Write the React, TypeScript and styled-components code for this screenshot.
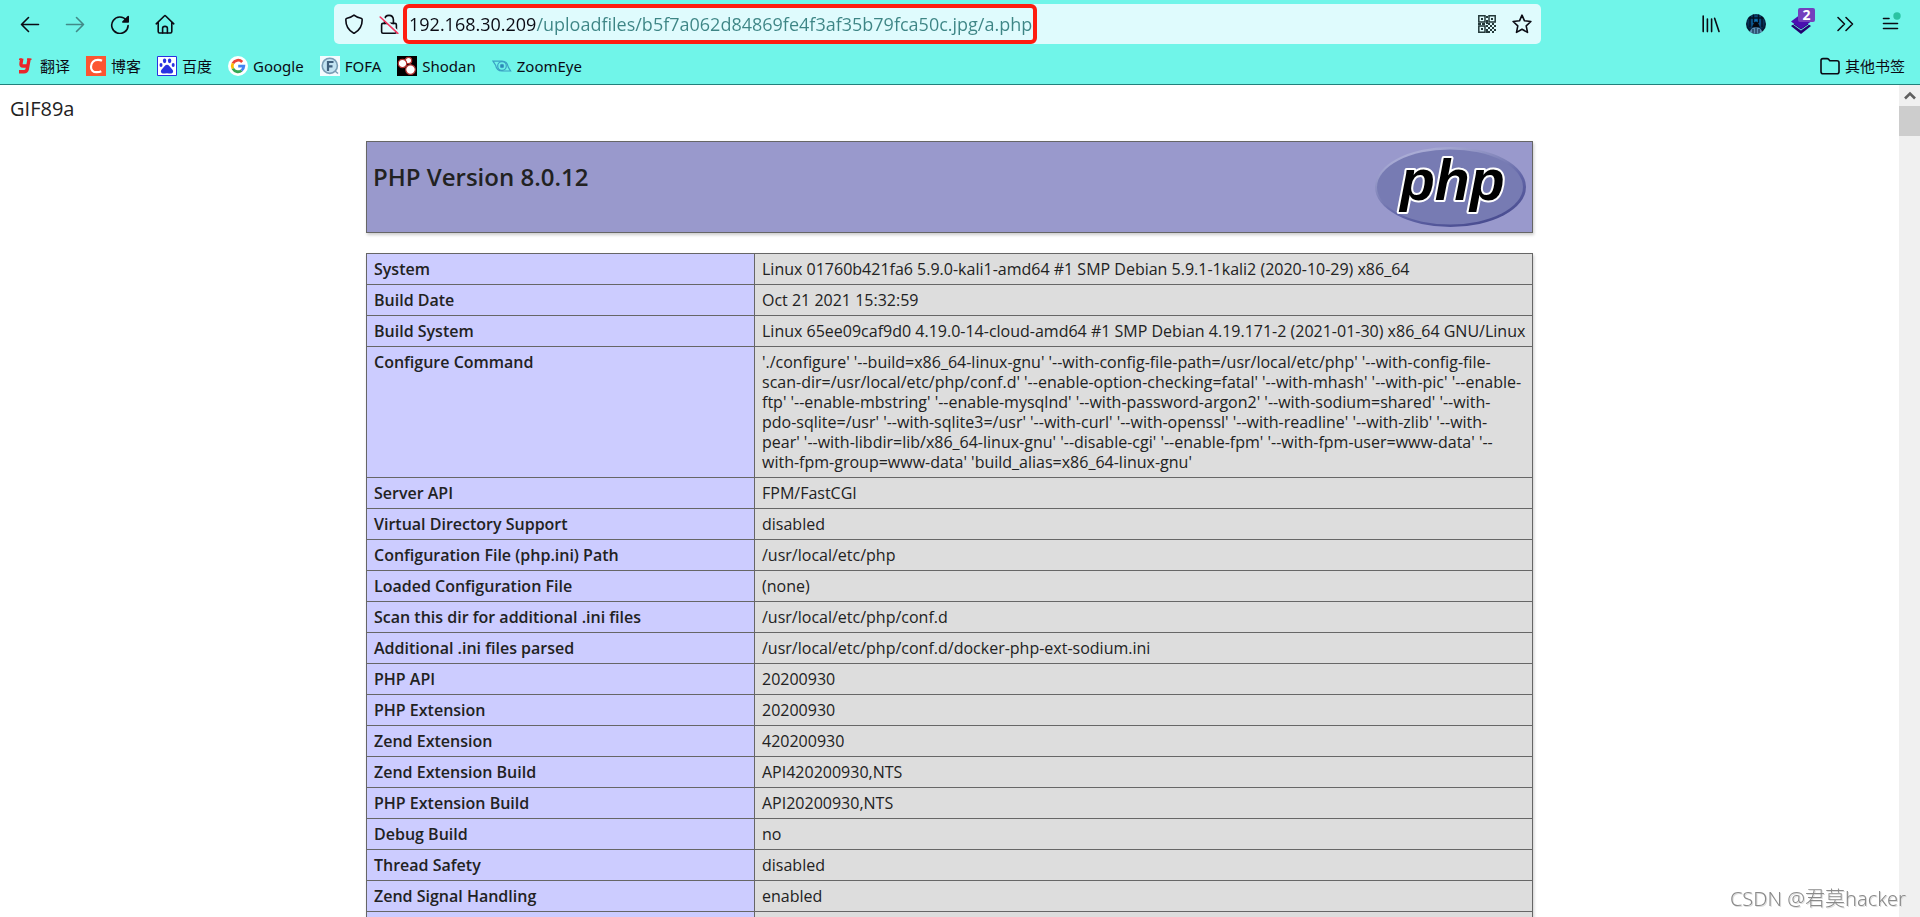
import React from 'react';
import styled, { createGlobalStyle } from 'styled-components';

const GlobalStyle = createGlobalStyle`
  *, *::before, *::after { box-sizing: border-box; }
  body {
    margin: 0;
    font-family: "Noto Sans", "Noto Sans CJK SC", sans-serif;
    color: #222;
    background: #fff;
  }
`;

/* ---------- browser chrome ---------- */

const Browser = styled.div`
  display: flex;
  flex-direction: column;
  height: 100vh;
  overflow: hidden;
`;

const Chrome = styled.header`
  flex: none;
  background: #70f5e9;
  border-bottom: 1px solid #22817c;
  color: #0b0b14;
`;

const Toolbar = styled.div`
  display: flex;
  align-items: center;
  height: 48px;
  padding: 0 7px;
`;

const Spring = styled.div`
  flex: 0 1 147px;
`;

const ToolButton = styled.button<{ $faded?: boolean }>`
  position: relative;
  display: flex;
  align-items: center;
  justify-content: center;
  flex: none;
  width: 45px;
  height: 40px;
  padding: 0;
  border: 0;
  background: none;
  color: inherit;
  opacity: ${p => (p.$faded ? 0.45 : 1)};
`;

const Badge = styled.span`
  position: absolute;
  top: 4px;
  right: 8px;
  width: 17px;
  height: 14px;
  border-radius: 2px;
  background: #7340bd;
  color: #fff;
  font: 700 14px/14px "Noto Sans", sans-serif;
  text-align: center;
`;

const AddressBar = styled.form`
  display: flex;
  align-items: center;
  flex: 1 1 0;
  min-width: 0;
  height: 40px;
  border-radius: 5px;
  background: #dffbfd;
`;

const BarGroup = styled.div`
  display: flex;
  gap: 15px;
  flex: none;
  padding: 0 9px 0 10px;

  &:first-child { padding-right: 4px; }
`;

const BarButton = styled.button`
  display: flex;
  align-items: center;
  justify-content: center;
  width: 20px;
  height: 40px;
  padding: 0;
  border: 0;
  background: none;
  color: inherit;
`;

const Marked = styled.label`
  display: flex;
  flex: 0 1 634px;
  min-width: 0;
  height: 40px;
  border: 4px solid #fe1d10;
  border-radius: 6px;
`;

const UrlInput = styled.input`
  flex: 1;
  min-width: 0;
  padding: 0 0 0 2px;
  border: 0;
  outline: 0;
  font: 18px/32px "Open Sans", sans-serif;
  color: transparent;
  background: linear-gradient(90deg, #0b0b14 129px, #3d8585 129px);
  background-clip: text;
  -webkit-background-clip: text;
`;

const BarFill = styled.div`
  flex: 1;
`;

const Bookmarks = styled.nav`
  display: flex;
  align-items: center;
  gap: 16px;
  height: 36px;
  padding: 0 15px;
`;

const Bookmark = styled.a<{ $end?: boolean }>`
  display: flex;
  align-items: center;
  gap: 5px;
  margin-left: ${p => (p.$end ? 'auto' : '0')};
  color: #0b0b14;
  font-size: 15px;
  line-height: 20px;
  text-decoration: none;
  white-space: nowrap;
`;

/* ---------- page ---------- */

const Viewport = styled.div`
  display: flex;
  flex: 1;
  min-height: 0;
`;

const Page = styled.main`
  flex: 1;
  min-width: 0;
  padding: 10px;
  overflow: hidden;
  font-family: "Open Sans", "Noto Sans CJK SC", sans-serif;
`;

const Prefix = styled.p`
  margin: 0 0 19px;
  font-size: 20px;
  line-height: 27px;
`;

const Banner = styled.section`
  display: flex;
  justify-content: space-between;
  max-width: 1167px;
  margin: 0 auto 20px;
  padding: 5px 6px;
  border: 1px solid #666;
  background: #9999cc;
  box-shadow: 1px 2px 3px #ccc;
`;

const Version = styled.h1`
  margin: 14px 0;
  font-size: 24px;
  font-weight: 600;
  line-height: 32px;
`;

const InfoTable = styled.table`
  width: 100%;
  max-width: 1167px;
  margin: 0 auto;
  border-collapse: collapse;
  box-shadow: 1px 2px 3px #ccc;
  font-size: 16px;
  line-height: 20px;
`;

const Label = styled.th`
  width: 388px;
  padding: 5px 5px 5px 7px;
  border: 1px solid #666;
  background: #ccccff;
  font-weight: 600;
  text-align: left;
  vertical-align: baseline;
`;

const Value = styled.td`
  padding: 5px 5px 5px 7px;
  border: 1px solid #666;
  background: #ddd;
  vertical-align: baseline;
`;

const Scrollbar = styled.div`
  flex: none;
  width: 21px;
  background: #f0f0f0;
`;

const ScrollArrow = styled.button`
  display: flex;
  align-items: center;
  justify-content: center;
  width: 21px;
  height: 21px;
  padding: 0;
  border: 0;
  background: none;
`;

const Thumb = styled.div`
  height: 30px;
  background: #cdcdcd;
`;

const Watermark = styled.div`
  position: fixed;
  right: 14px;
  bottom: 4px;
  color: #8a8a8a;
  font-size: 20px;
  font-weight: 300;
  line-height: 28px;
  text-shadow: 1px 1px 0 #ddd;
`;

/* ---------- icons ---------- */

const Line = ({ children, w = 20, h = 20, sw = 1.6 }: { children: React.ReactNode; w?: number; h?: number; sw?: number }) => (
  <svg width={w} height={h} viewBox={`0 0 ${w} ${h}`} fill="none" stroke="currentColor" strokeWidth={sw} strokeLinecap="round" strokeLinejoin="round" aria-hidden="true">
    {children}
  </svg>
);

const BackIcon = () => <Line><path d="M1.5 10.5H18.5M8.5 3.5L1.5 10.5L8.5 17.5" /></Line>;
const ForwardIcon = () => <Line><path d="M1.5 10.5H18.5M11.5 3.5L18.5 10.5L11.5 17.5" /></Line>;
const ReloadIcon = () => (
  <Line>
    <path d="M16.4 6.2A8.2 8.2 0 1 0 18.1 11.6" />
    <path d="M18.2 2.6V8H12.8Z" fill="currentColor" />
  </Line>
);
const HomeIcon = () => (
  <Line>
    <path d="M1.2 9.8L9.3 2Q10 1.4 10.7 2L18.8 9.8M3.2 8.6V17.6Q3.2 19 4.6 19H15.4Q16.8 19 16.8 17.6V8.6" />
    <path d="M7.6 19V14.2Q7.6 12.4 10 12.4Q12.4 12.4 12.4 14.2V19" />
  </Line>
);
const ShieldIcon = () => (
  <Line><path d="M10 1.2C12 2.9 14.4 3.8 17 4.2Q18.2 4.5 18.2 5.8C18.2 12 15.6 16.6 10 19.4C4.4 16.6 1.8 12 1.8 5.8Q1.8 4.5 3 4.2C5.6 3.8 8 2.9 10 1.2Z" /></Line>
);
const InsecureIcon = () => (
  <Line>
    <path d="M5.6 9.4V5.8Q5.8 1.4 10 1.4Q14.2 1.4 14.4 5.8V9.4" />
    <path d="M4 9.4H16Q17.4 9.4 17.4 10.8V17.8Q17.4 19.2 16 19.2H4Q2.6 19.2 2.6 17.8V10.8Q2.6 9.4 4 9.4Z" />
    <path d="M2 2L19.6 18.4" stroke="#dffbfd" strokeWidth="2.4" />
    <path d="M1.2 3L18.8 19.4" stroke="#f5335f" strokeWidth="1.6" />
  </Line>
);
const QrIcon = () => (
  <svg width="20" height="20" viewBox="0 0 20 20" fill="none" stroke="#24393a" strokeWidth="1.5" aria-hidden="true">
    <path d="M1.8 1.8H8V8H1.8ZM12 1.8H18.2V8H12ZM1.8 12H8V18.2H1.8Z" />
    <path fill="#24393a" stroke="none" d="M4 4h2v2H4zM14 4h2v2h-2zM4 14h2v2H4zM9 2h2v2H9zM9 6h2v4H9zM1 9h3v2H1zM5 9h3v2H5zM11 9h2v2h-2zM15 9h2v2h-2zM17 11h2v2h-2zM13 11h2v2h-2zM9 11h2v2H9zM11 13h2v2h-2zM15 13h2v2h-2zM9 15h2v4H9zM13 15h2v2h-2zM17 15h2v2h-2zM11 17h2v2h-2zM15 17h2v2h-2z" />
  </svg>
);
const StarIcon = () => (
  <Line><path d="M10 1.2L12.5 6.8L18.9 7.5L14.2 11.8L15.5 18.4L10 15.2L4.5 18.4L5.8 11.8L1.1 7.5L7.5 6.8Z" /></Line>
);
const LibraryIcon = () => <Line><path d="M2.2 2V17.6M6.4 5V17.6M10.6 5V17.6M13.6 4.2L18 17.4" /></Line>;
const AvatarIcon = () => (
  <svg width="20" height="20" viewBox="0 0 20 20" aria-hidden="true">
    <defs>
      <clipPath id="disc"><circle cx="10" cy="10" r="10" /></clipPath>
      <radialGradient id="glow" cx="0.5" cy="0.4" r="0.5">
        <stop offset="0" stopColor="#1183d0" />
        <stop offset="1" stopColor="#041830" />
      </radialGradient>
    </defs>
    <g clipPath="url(#disc)">
      <path fill="url(#glow)" d="M0 0H20V20H0Z" />
      <path stroke="#041022" strokeWidth="1.4" d="M4 0V13M7.500 0V9M12.500 0V9M16 0V13M0 4H20" />
      <path fill="#05070d" d="M6 13.500L8 8.500Q10 6.500 12 8.500L14 13.500Z" />
      <path fill="#5d8fb4" d="M3 20Q4 14.500 8 13.500H12Q16 14.500 17 20Z" />
      <path stroke="#16324c" strokeWidth="1.200" d="M7 20V15M10 20V14M13 20V15" />
    </g>
  </svg>
);
const LayersIcon = () => (
  <svg width="20" height="20" viewBox="0 0 20 20" aria-hidden="true">
    <path fill="#23006f" d="M0 12L10 5L20 12L10 20Z" />
    <path fill="#70f5e9" d="M0 8.500L10 15.600L20 8.500V9.300L10 16.400L0 9.300Z" />
    <path fill="#4a0fb0" d="M0 7.500L10 0L20 7.500L10 15Z" />
  </svg>
);
const MoreIcon = () => <Line><path d="M2 3.500L8.500 10L2 16.500M10 3.500L16.500 10L10 16.500" /></Line>;
const MenuIcon = () => (
  <Line w={22} h={24}>
    <path d="M3.500 6.500H9M3.500 11.500H17.500M3.500 16.500H17.500" />
    <circle cx="17" cy="4" r="3.700" fill="#2ac3a2" stroke="none" />
  </Line>
);
const FolderIcon = () => (
  <Line><path d="M3 2.600H7Q8 2.600 8.600 3.300L9.800 4.700H17Q19 4.700 19 6.700V15.800Q19 17.800 17 17.800H3Q1 17.800 1 15.800V4.600Q1 2.600 3 2.600Z" /></Line>
);

const YoudaoIcon = () => (
  <svg width="20" height="20" viewBox="0 0 20 20" fill="none" stroke="#e9252b" aria-hidden="true">
    <path strokeWidth="3.400" d="M6.800 2.500L6 7.500Q5.600 10 8 10H12" />
    <path strokeWidth="3.400" d="M14.200 2.500L12.300 13Q11.600 15.800 9 15.800H4" />
    <path strokeWidth="1.600" d="M4 3.200H7M12 3.200H16.500" />
  </svg>
);
const BlogIcon = () => (
  <svg width="20" height="20" viewBox="0 0 20 20" aria-hidden="true">
    <path fill="#fc5531" d="M0 0H20V20H0Z" />
    <path fill="none" stroke="#fff" strokeWidth="2.200" d="M16 4.800Q14.500 3.900 12 3.900C7.800 3.900 5.200 6.800 5 10.600C4.800 14 7 16.200 10.500 16.200Q13.500 16.200 15.300 15.200" />
  </svg>
);
const BaiduIcon = () => (
  <svg width="20" height="20" viewBox="0 0 20 20" fill="#2932e1" aria-hidden="true">
    <path fill="#fff" stroke="#2932e1" d="M.5 .5H19.500V19.500H.5Z" />
    <ellipse cx="7.600" cy="4.800" rx="1.700" ry="2.400" />
    <ellipse cx="12.600" cy="4.800" rx="1.700" ry="2.400" />
    <ellipse cx="4" cy="9" rx="1.500" ry="2.100" />
    <ellipse cx="16.200" cy="9" rx="1.500" ry="2.100" />
    <path d="M10 8.800C12 8.800 12.600 10.800 14.200 12.200C16 13.800 16.600 15 15.800 16.600C14.800 18.200 12.600 17.300 10 17.300C7.400 17.300 5.200 18.200 4.200 16.600C3.400 15 4 13.800 5.800 12.200C7.400 10.800 8 8.800 10 8.800Z" />
  </svg>
);
const GoogleIcon = () => (
  <svg width="20" height="20" viewBox="0 0 20 20" fill="none" strokeWidth="2.800" aria-hidden="true">
    <circle cx="10" cy="10" r="10" fill="#fff" />
    <path stroke="#ea4335" d="M14.200 6A5.800 5.800 0 0 0 4.900 7.300" />
    <path stroke="#fbbc05" d="M4.900 7.300A5.800 5.800 0 0 0 4.900 12.700" />
    <path stroke="#34a853" d="M4.900 12.700A5.800 5.800 0 0 0 13.600 14.500" />
    <path stroke="#4285f4" d="M13.600 14.500Q15.600 13 15.800 10.200H10.200" />
  </svg>
);
const FofaIcon = () => (
  <svg width="20" height="20" viewBox="0 0 20 20" fill="none" aria-hidden="true">
    <path fill="#f3fbff" d="M0 0H20V20H0Z" />
    <circle cx="9.800" cy="9.800" r="7.600" fill="#c3e3f2" stroke="#7a9db5" strokeWidth="1.600" />
    <path stroke="#3f5f7d" strokeWidth="2.200" d="M8 15V6H13.500M8 10.400H12.500" />
    <path stroke="#7a9db5" strokeWidth="1.500" d="M15 15L18 17.500" />
  </svg>
);
const ShodanIcon = () => (
  <svg width="20" height="20" viewBox="0 0 20 20" aria-hidden="true">
    <path d="M0 0H20V20H0Z" />
    <g fill="#fff" stroke="#b4322f" strokeWidth="1.200">
      <circle cx="11.500" cy="4.500" r="3.200" />
      <circle cx="5.500" cy="7.500" r="4.200" />
      <circle cx="13.500" cy="13.600" r="4.800" />
    </g>
  </svg>
);
const ZoomEyeIcon = () => (
  <svg width="20" height="20" viewBox="0 0 20 20" fill="none" stroke="#3aa0c4" strokeWidth="1.200" aria-hidden="true">
    <path d="M1 5.200H10C14 5.200 15.600 8 16.200 11L18.600 15H10C6 15 4.200 12.500 3.600 9.200Z" />
    <circle cx="10" cy="10" r="4.300" />
    <circle cx="10" cy="10" r="1.600" fill="#2c7fb0" />
  </svg>
);

const PhpLogo = () => (
  <svg width="151" height="80" viewBox="0 0 151 80" role="img" aria-label="PHP logo">
    <defs>
      <linearGradient id="rim" x1="0.2" y1="0" x2="0.8" y2="1">
        <stop offset="0" stopColor="#b4b6dc" />
        <stop offset="0.450" stopColor="#777bb3" />
        <stop offset="0.600" stopColor="#6266a8" />
        <stop offset="1" stopColor="#45488c" />
      </linearGradient>
    </defs>
    <ellipse cx="75.500" cy="40" rx="75.500" ry="40" fill="url(#rim)" />
    <ellipse cx="75" cy="40" rx="73" ry="37.500" fill="#777bb3" />
    <text x="25" y="53" fontFamily="Liberation Sans, sans-serif" fontSize="57" fontWeight="700" fontStyle="italic" stroke="#fff" strokeWidth="4" strokeLinejoin="round" paintOrder="stroke" fill="#000">php</text>
  </svg>
);

const ScrollUpIcon = () => (
  <svg width="12" height="9" viewBox="0 0 12 9" fill="none" stroke="#606060" strokeWidth="2.600" aria-hidden="true">
    <path d="M1 7.500L6 2.500L11 7.500" />
  </svg>
);

/* ---------- data ---------- */

const bookmarks = [
  { label: '翻译', Icon: YoudaoIcon },
  { label: '博客', Icon: BlogIcon },
  { label: '百度', Icon: BaiduIcon },
  { label: 'Google', Icon: GoogleIcon },
  { label: 'FOFA', Icon: FofaIcon },
  { label: 'Shodan', Icon: ShodanIcon },
  { label: 'ZoomEye', Icon: ZoomEyeIcon },
];

const configure = [
  "'./configure' '--build=x86_64-linux-gnu' '--with-config-file-path=/usr/local/etc/php' '--with-config-file-",
  "scan-dir=/usr/local/etc/php/conf.d' '--enable-option-checking=fatal' '--with-mhash' '--with-pic' '--enable-",
  "ftp' '--enable-mbstring' '--enable-mysqlnd' '--with-password-argon2' '--with-sodium=shared' '--with-",
  "pdo-sqlite=/usr' '--with-sqlite3=/usr' '--with-curl' '--with-openssl' '--with-readline' '--with-zlib' '--with-",
  "pear' '--with-libdir=lib/x86_64-linux-gnu' '--disable-cgi' '--enable-fpm' '--with-fpm-user=www-data' '--",
  "with-fpm-group=www-data' 'build_alias=x86_64-linux-gnu'",
];

const info: [string, string | string[]][] = [
  ['System', 'Linux 01760b421fa6 5.9.0-kali1-amd64 #1 SMP Debian 5.9.1-1kali2 (2020-10-29) x86_64'],
  ['Build Date', 'Oct 21 2021 15:32:59'],
  ['Build System', 'Linux 65ee09caf9d0 4.19.0-14-cloud-amd64 #1 SMP Debian 4.19.171-2 (2021-01-30) x86_64 GNU/Linux'],
  ['Configure Command', configure],
  ['Server API', 'FPM/FastCGI'],
  ['Virtual Directory Support', 'disabled'],
  ['Configuration File (php.ini) Path', '/usr/local/etc/php'],
  ['Loaded Configuration File', '(none)'],
  ['Scan this dir for additional .ini files', '/usr/local/etc/php/conf.d'],
  ['Additional .ini files parsed', '/usr/local/etc/php/conf.d/docker-php-ext-sodium.ini'],
  ['PHP API', '20200930'],
  ['PHP Extension', '20200930'],
  ['Zend Extension', '420200930'],
  ['Zend Extension Build', 'API420200930,NTS'],
  ['PHP Extension Build', 'API20200930,NTS'],
  ['Debug Build', 'no'],
  ['Thread Safety', 'disabled'],
  ['Zend Signal Handling', 'enabled'],
  ['\u00a0', '\u00a0'],
];

export default function App() {
  return (
    <Browser>
      <GlobalStyle />
      <Chrome>
        <Toolbar>
          <ToolButton aria-label="Back"><BackIcon /></ToolButton>
          <ToolButton aria-label="Forward" $faded><ForwardIcon /></ToolButton>
          <ToolButton aria-label="Reload"><ReloadIcon /></ToolButton>
          <ToolButton aria-label="Home"><HomeIcon /></ToolButton>
          <Spring />
          <AddressBar>
            <BarGroup>
              <BarButton type="button" aria-label="Tracking protection"><ShieldIcon /></BarButton>
              <BarButton type="button" aria-label="Connection not secure"><InsecureIcon /></BarButton>
            </BarGroup>
            <Marked>
              <UrlInput aria-label="Address" spellCheck={false} defaultValue="192.168.30.209/uploadfiles/b5f7a062d84869fe4f3af35b79fca50c.jpg/a.php" />
            </Marked>
            <BarFill />
            <BarGroup>
              <BarButton type="button" aria-label="QR code"><QrIcon /></BarButton>
              <BarButton type="button" aria-label="Bookmark this page"><StarIcon /></BarButton>
            </BarGroup>
          </AddressBar>
          <Spring />
          <ToolButton aria-label="Library"><LibraryIcon /></ToolButton>
          <ToolButton aria-label="Account"><AvatarIcon /></ToolButton>
          <ToolButton aria-label="Extension"><LayersIcon /><Badge>2</Badge></ToolButton>
          <ToolButton aria-label="More tools"><MoreIcon /></ToolButton>
          <ToolButton aria-label="Menu"><MenuIcon /></ToolButton>
        </Toolbar>
        <Bookmarks>
          {bookmarks.map(({ label, Icon }) => (
            <Bookmark key={label} href="#"><Icon />{label}</Bookmark>
          ))}
          <Bookmark href="#" $end><FolderIcon />其他书签</Bookmark>
        </Bookmarks>
      </Chrome>
      <Viewport>
        <Page>
          <Prefix>GIF89a</Prefix>
          <Banner>
            <Version>PHP Version 8.0.12</Version>
            <PhpLogo />
          </Banner>
          <InfoTable>
            <tbody>
              {info.map(([label, value]) => (
                <tr key={label}>
                  <Label scope="row">{label}</Label>
                  <Value>
                    {Array.isArray(value)
                      ? value.map((line, i) => <React.Fragment key={line}>{i > 0 && <br />}{line}</React.Fragment>)
                      : value}
                  </Value>
                </tr>
              ))}
            </tbody>
          </InfoTable>
        </Page>
        <Scrollbar>
          <ScrollArrow aria-label="Scroll up"><ScrollUpIcon /></ScrollArrow>
          <Thumb />
        </Scrollbar>
      </Viewport>
      <Watermark>CSDN @君莫hacker</Watermark>
    </Browser>
  );
}
